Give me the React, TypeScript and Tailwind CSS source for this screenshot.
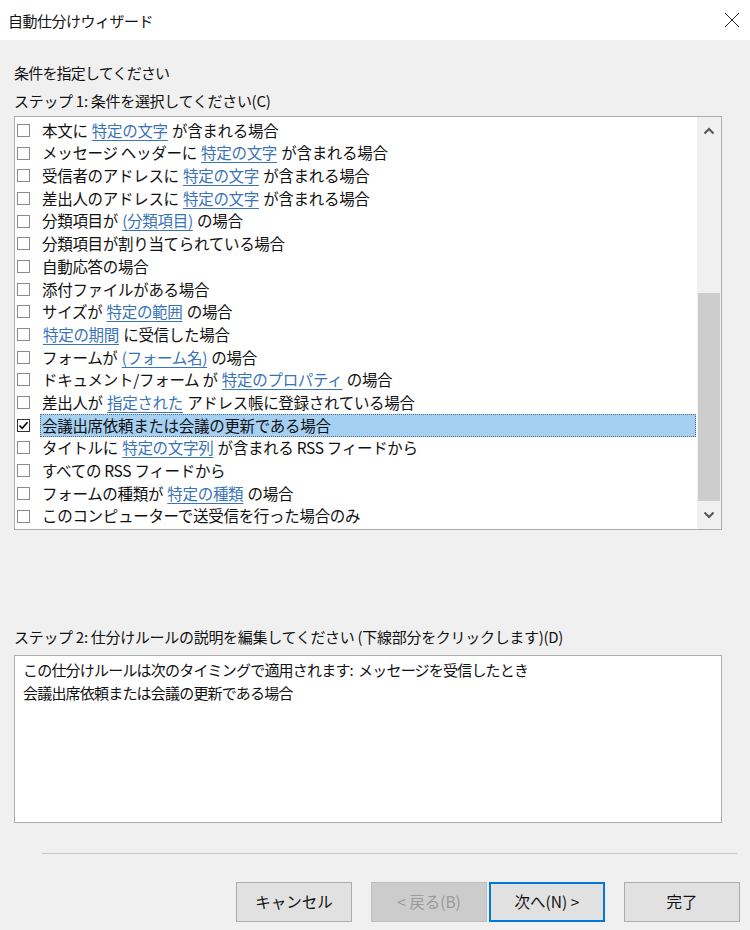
import React from "react";

type Seg = { t: string; link?: boolean };

const rows: Seg[][] = [
  [{ t: "本文に " }, { t: "特定の文字", link: true }, { t: " が含まれる場合" }],
  [{ t: "メッセージ ヘッダーに " }, { t: "特定の文字", link: true }, { t: " が含まれる場合" }],
  [{ t: "受信者のアドレスに " }, { t: "特定の文字", link: true }, { t: " が含まれる場合" }],
  [{ t: "差出人のアドレスに " }, { t: "特定の文字", link: true }, { t: " が含まれる場合" }],
  [{ t: "分類項目が " }, { t: "(分類項目)", link: true }, { t: " の場合" }],
  [{ t: "分類項目が割り当てられている場合" }],
  [{ t: "自動応答の場合" }],
  [{ t: "添付ファイルがある場合" }],
  [{ t: "サイズが " }, { t: "特定の範囲", link: true }, { t: " の場合" }],
  [{ t: "特定の期間", link: true }, { t: " に受信した場合" }],
  [{ t: "フォームが " }, { t: "(フォーム名)", link: true }, { t: " の場合" }],
  [{ t: "ドキュメント/フォーム が " }, { t: "特定のプロパティ", link: true }, { t: " の場合" }],
  [{ t: "差出人が " }, { t: "指定された", link: true }, { t: " アドレス帳に登録されている場合" }],
  [{ t: "会議出席依頼または会議の更新である場合" }],
  [{ t: "タイトルに " }, { t: "特定の文字列", link: true }, { t: " が含まれる RSS フィードから" }],
  [{ t: "すべての RSS フィードから" }],
  [{ t: "フォームの種類が " }, { t: "特定の種類", link: true }, { t: " の場合" }],
  [{ t: "このコンピューターで送受信を行った場合のみ" }],
];

const font = { fontFamily: '"Noto Sans CJK JP", "Noto Sans", sans-serif' };

function CheckBox({ checked }: { checked?: boolean }) {
  return (
    <div
      className={
        "w-[13px] h-[13px] bg-white border flex items-center justify-center shrink-0 " +
        (checked ? "border-[#333333]" : "border-[#8a8a8a]")
      }
    >
      {checked && (
        <svg width="11" height="11" viewBox="0 0 11 11">
          <path d="M1.5 5.5 L4.2 8.3 L9.5 2.2" fill="none" stroke="#000" strokeWidth="1.6" />
        </svg>
      )}
    </div>
  );
}

export default function App() {
  return (
    <div
      className="w-[750px] h-[930px] bg-[#f0f0f0] flex flex-col text-[#111111] overflow-hidden"
      style={font}
    >
      {/* Title bar */}
      <div className="h-[40px] bg-white flex items-center justify-between pl-[8px] pr-[8px] shrink-0">
        <span className="text-[15px] leading-none tracking-[-0.5px]">自動仕分けウィザード</span>
        <svg width="16" height="16" viewBox="0 0 16 16" className="mr-[2px]">
          <path d="M1 1 L15 15 M15 1 L1 15" stroke="#222" strokeWidth="1" fill="none" />
        </svg>
      </div>

      <div className="flex flex-col px-[14px] pt-[22px]">
        <div className="h-[22px] leading-[22px] text-[15px] tracking-[-0.8px]">条件を指定してください</div>
        <div className="h-[22px] leading-[22px] text-[15px] mt-[6px] tracking-[-0.3px] whitespace-pre">
          ステップ 1: 条件を選択してください(C)
        </div>

        {/* List box */}
        <div className="mt-[4px] w-[708px] h-[414px] bg-white border border-[#adadad] flex">
          <div className="flex-1 flex flex-col pt-[2px]">
            {rows.map((segs, i) => {
              const sel = i === 13;
              return (
                <div key={i} className="h-[22.7px] flex items-center pl-[2px]">
                  <CheckBox checked={sel} />
                  <div
                    className={
                      "ml-[10px] h-full flex items-center text-[15.5px] whitespace-pre tracking-[-0.3px] " +
                      (sel
                        ? "flex-1 bg-[#a6d0f2] border border-dotted border-[#4a6a88] pl-[1px]"
                        : "pl-[1px] border border-transparent")
                    }
                  >
                    {segs.map((s, j) =>
                      s.link ? (
                        <span key={j} className="text-[#3a74b8] underline underline-offset-[3px] decoration-[1px] mx-[1px]">
                          {s.t}
                        </span>
                      ) : (
                        <span key={j}>{s.t}</span>
                      )
                    )}
                  </div>
                </div>
              );
            })}
          </div>
          {/* Scrollbar */}
          <div className="w-[24px] bg-[#f0f0f0] flex flex-col ml-[1px]">
            <div className="h-[24px] flex items-center justify-center pt-[4px]">
              <svg width="12" height="8" viewBox="0 0 12 8">
                <path d="M1.5 6.5 L6 2 L10.5 6.5" fill="none" stroke="#555" strokeWidth="2" />
              </svg>
            </div>
            <div className="h-[152px]" />
            <div className="h-[208px] bg-[#cdcdcd] mx-[1px]" />
            <div className="flex-1 flex items-center justify-center">
              <svg width="12" height="8" viewBox="0 0 12 8">
                <path d="M1.5 1.5 L6 6 L10.5 1.5" fill="none" stroke="#555" strokeWidth="2" />
              </svg>
            </div>
          </div>
        </div>

        <div className="h-[22px] leading-[22px] text-[15px] mt-[96px] tracking-[-0.3px] whitespace-pre">
          ステップ 2: 仕分けルールの説明を編集してください (下線部分をクリックします)(D)
        </div>
        <div className="mt-[7px] w-[708px] h-[168px] bg-white border border-[#adadad] pl-[8px] pt-[2px]">
          <div className="h-[23px] leading-[23px] text-[15px] tracking-[-0.8px] whitespace-pre">
            この仕分けルールは次のタイミングで適用されます:  メッセージを受信したとき
          </div>
          <div className="h-[23px] leading-[23px] text-[15px] tracking-[-0.8px]">
            会議出席依頼または会議の更新である場合
          </div>
        </div>
      </div>

      {/* Separator */}
      <div className="ml-[42px] mr-[13px] mt-[30px] h-[1px] bg-[#c8c8c8]" />

      {/* Buttons */}
      <div className="flex mt-[28px] pl-[236px]">
        <button className="w-[116px] h-[40px] bg-[#e1e1e1] border border-[#adadad] text-[15.5px] text-[#111111]">
          キャンセル
        </button>
        <button className="ml-[19px] w-[116px] h-[40px] bg-[#cccccc] border border-[#bfbfbf] text-[15.5px] text-[#9a9a9a]">
          &lt; 戻る(B)
        </button>
        <button className="ml-[2px] w-[116px] h-[40px] bg-[#e1e1e1] border-2 border-[#0078d7] text-[15.5px] text-[#111111]">
          次へ(N) &gt;
        </button>
        <button className="ml-[19px] w-[116px] h-[40px] bg-[#e1e1e1] border border-[#adadad] text-[15.5px] text-[#111111]">
          完了
        </button>
      </div>
    </div>
  );
}
